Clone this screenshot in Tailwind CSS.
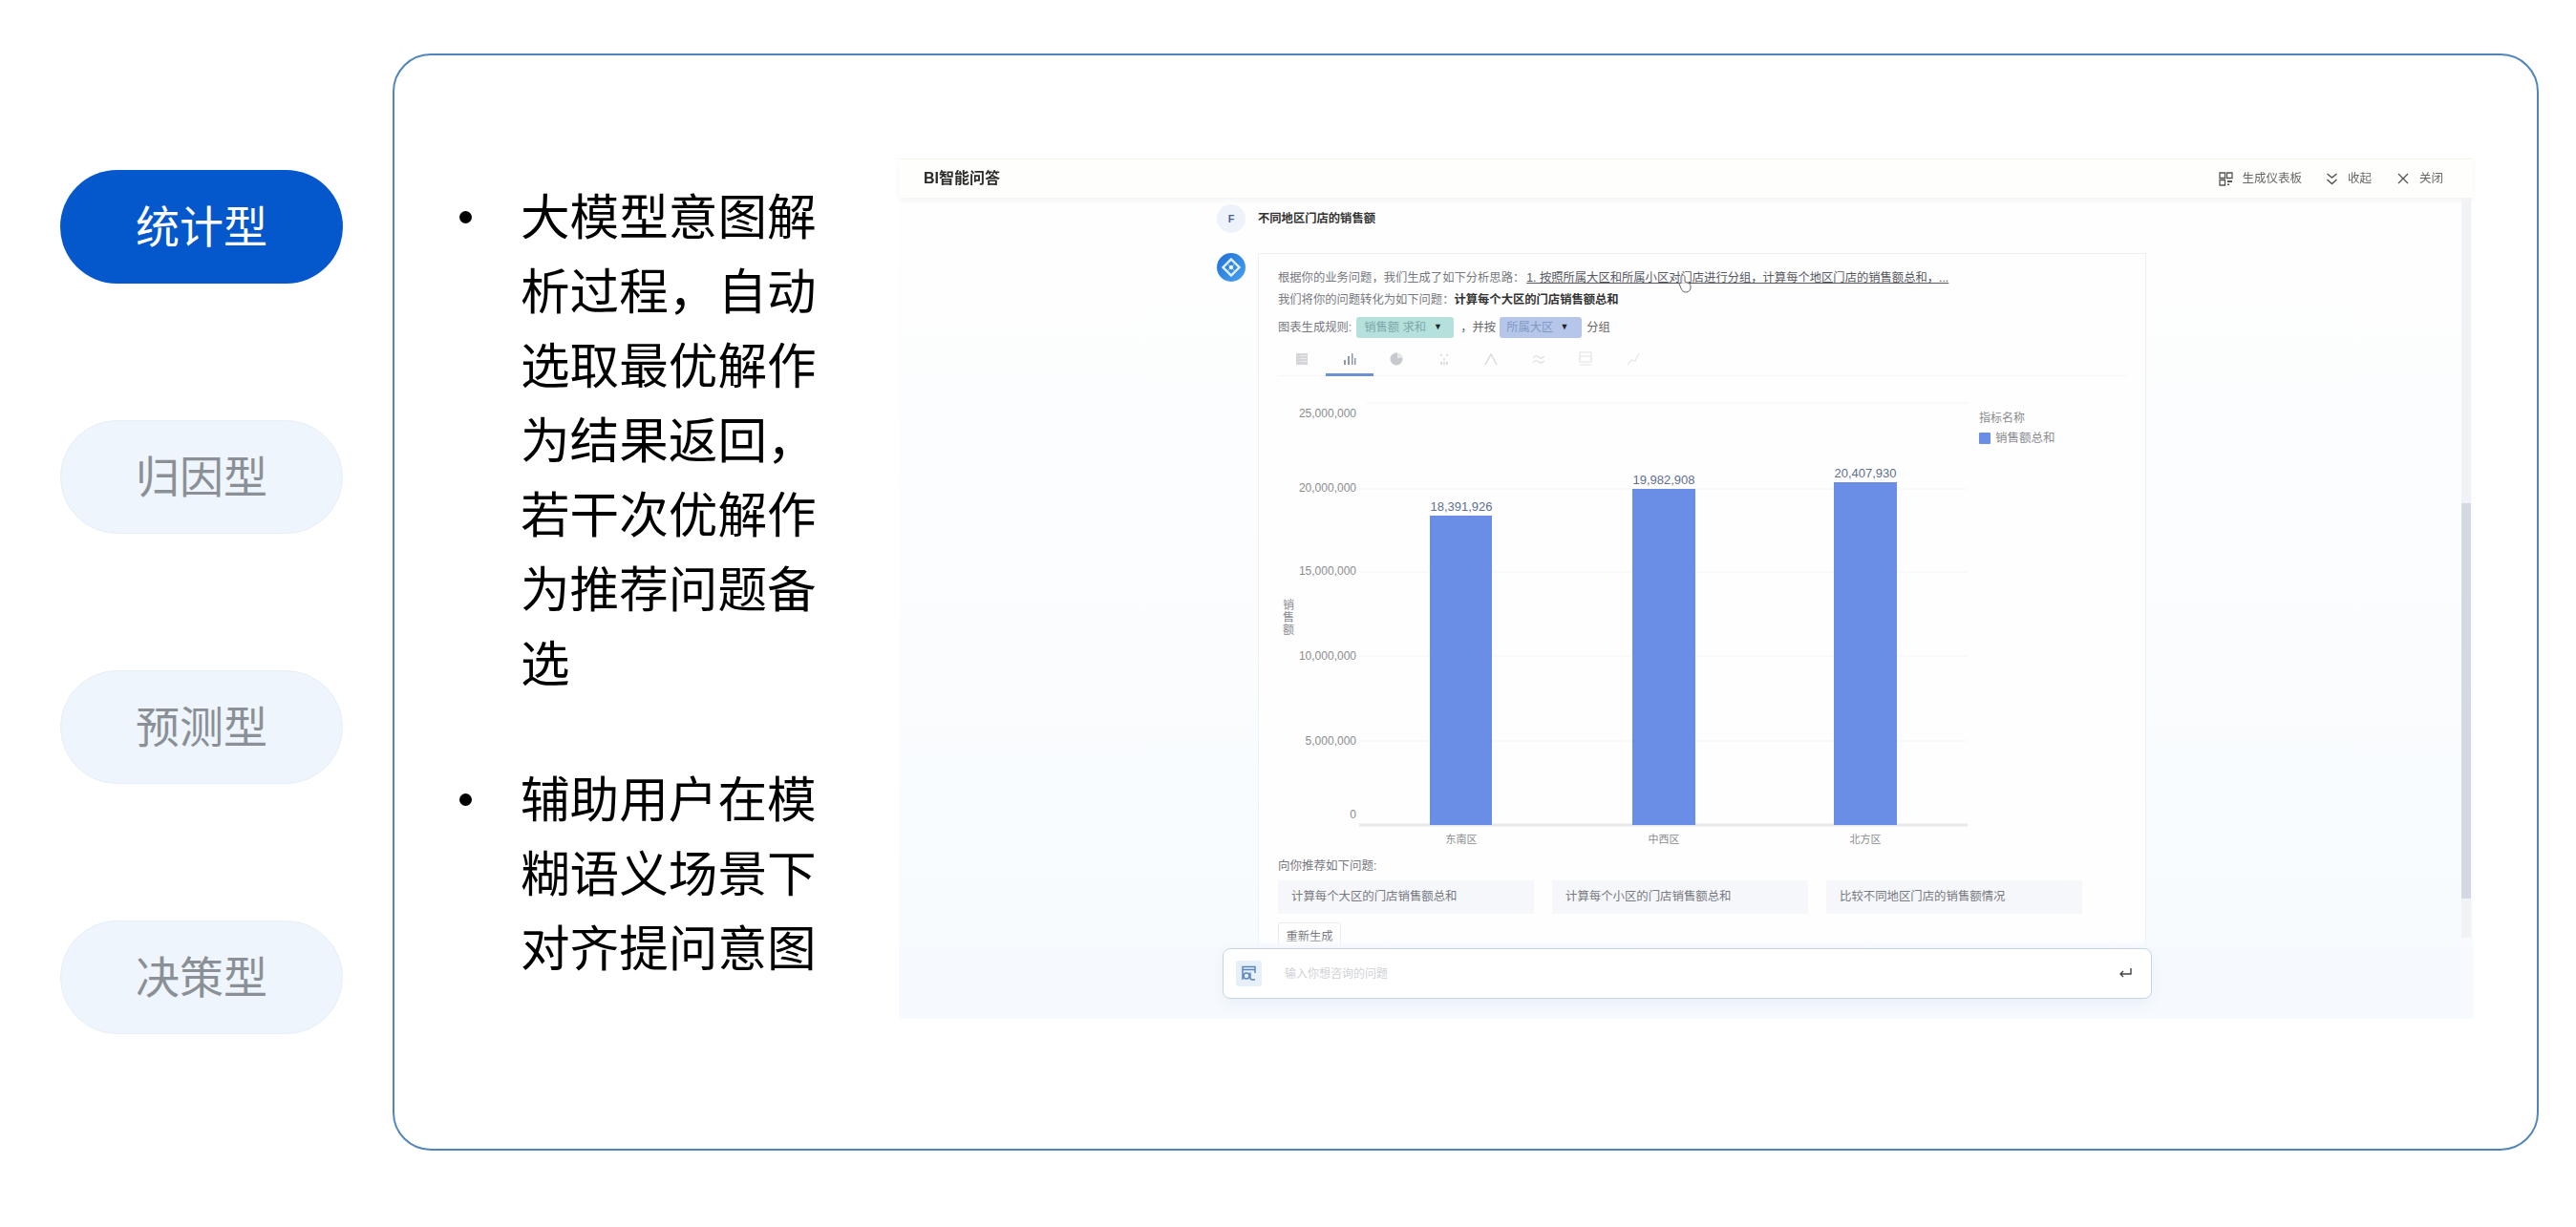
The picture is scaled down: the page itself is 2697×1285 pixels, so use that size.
<!DOCTYPE html>
<html lang="zh-CN">
<head>
  <meta charset="UTF-8" />
  <title>统计型</title>
  <script src="https://cdn.jsdelivr.net/npm/@tailwindcss/browser@4"></script>
</head>
<body class="bg-white font-['Liberation_Sans','Noto_Sans_CJK_SC',sans-serif] overflow-hidden">
  <div class="w-[2697px] h-[1285px] flex">

    <!-- left pills -->
    <div class="w-[411px] shrink-0 pl-[63px] pt-[178px] flex flex-col gap-[143px]">
      <div class="w-[296px] h-[119px] pt-[2px] rounded-full bg-[#0558cc] text-white text-[46px] flex items-center justify-center">统计型</div>
      <div class="w-[296px] h-[119px] pt-[2px] rounded-full bg-[#eef5fc] border border-[#e6eef6] text-[#8b9096] text-[46px] flex items-center justify-center">归因型</div>
      <div class="w-[296px] h-[119px] pt-[2px] rounded-full bg-[#eef5fc] border border-[#e6eef6] text-[#8b9096] text-[46px] flex items-center justify-center">预测型</div>
      <div class="w-[296px] h-[119px] pt-[2px] rounded-full bg-[#eef5fc] border border-[#e6eef6] text-[#8b9096] text-[46px] flex items-center justify-center">决策型</div>
    </div>

    <!-- main card -->
    <div class="mt-[56px] w-[2247px] h-[1149px] border-2 border-[#5285b8] rounded-[40px] flex items-start pl-[68px]">
      <ul class="w-[376px] shrink-0 mt-[131px] flex flex-col gap-[64px] text-black text-[51.6px] leading-[78px]">
        <li class="flex">
          <span class="w-[13px] h-[13px] mt-[32px] mr-[51px] shrink-0 rounded-full bg-black"></span>
          <span class="w-[312px]">大模型意图解析过程，自动选取最优解作为结果返回，若干次优解作为推荐问题备选</span>
        </li>
        <li class="flex">
          <span class="w-[13px] h-[13px] mt-[32px] mr-[51px] shrink-0 rounded-full bg-black"></span>
          <span class="w-[312px]">辅助用户在模糊语义场景下对齐提问意图</span>
        </li>
      </ul>

      <!-- embedded screenshot -->
      <div class="ml-[84px] mt-[108px] w-[1648px] h-[901px] shrink-0 flex flex-col blur-[0.7px]">
        <div class="relative z-10 h-[41px] shrink-0 border-t border-[#f6f3e2] bg-[#fefefc] shadow-[0_3px_6px_#f3f4f6] flex items-center justify-between pl-[26px] pr-[31px]">
          <span class="text-[16px] font-bold text-[#2b2b2b]">BI智能问答</span>
          <div class="flex items-center text-[12.5px] text-[#666]">
            <svg class="w-[15px] h-[15px] mr-[9px]" viewBox="0 0 15 15" fill="none" stroke="#555" stroke-width="1.3"><path d="M1 1h5.500v5.500H1zM8.500 1H14v5.500H8.500zM1 8.500h5.500V14H1z" /><path d="M9 9h5v2H9zM9 12.500h2V14H9z" fill="#555" stroke="none" /></svg>
            <span>生成仪表板</span>
            <svg class="w-[13px] h-[15px] ml-[25px] mr-[10px]" viewBox="0 0 13 15" fill="none" stroke="#555" stroke-width="1.500"><path d="M1.500 2l5 4 5-4M1.500 8l5 4.500 5-4.500" /></svg>
            <span>收起</span>
            <svg class="w-[12px] h-[12px] ml-[27px] mr-[11px]" viewBox="0 0 12 12" fill="none" stroke="#555" stroke-width="1.300"><path d="M1 1l10 10M11 1L1 11" /></svg>
            <span>关闭</span>
          </div>
        </div>

        <div class="relative flex-1 overflow-hidden bg-linear-to-b from-[#fefefe] to-[#f7fbfe] pl-[333px] pt-[7px]">
          <!-- question -->
          <div class="flex items-center gap-[13px] h-[30px]">
            <div class="w-[30px] h-[30px] rounded-full bg-[#eef2fb] text-[#4a5fa8] text-[11px] font-bold flex items-center justify-center">F</div>
            <span class="text-[12.3px] font-bold text-[#333]">不同地区门店的销售额</span>
          </div>

          <!-- answer -->
          <div class="mt-[21px] flex items-start gap-[13px]">
            <div class="w-[30px] h-[30px] shrink-0 rounded-full bg-linear-to-br from-[#1f6fd6] to-[#4aa3ee] flex items-center justify-center">
              <svg class="w-[22px] h-[22px]" viewBox="0 0 22 22" fill="none" stroke="#e4f1fc">
                <path d="M11 2.500l8.500 8.500-8.500 8.500L2.500 11z" stroke-width="2.400" />
                <path d="M6.500 6.500l9 9M15.500 6.500l-9 9" stroke="#a9d2f5" stroke-width="1" />
                <path d="M11 8.500l2.500 2.500-2.500 2.500L8.500 11z" fill="#fff" stroke="none" />
              </svg>
            </div>
            <div class="w-[930px] h-[760px] shrink-0 bg-[#fefefe] border border-[#eef0f4] pl-[20px] pt-[14px] pr-[19px] text-[12.3px] text-[#77797e]">
              <div class="h-[22px] flex items-center">
                <span>根据你的业务问题，我们生成了如下分析思路：</span>
                <span class="ml-[2px] text-[#55585e] underline">1. 按照所属大区和所属小区对门店进行分组，计算每个地区门店的销售额总和，...</span>
              </div>
              <div class="mt-[1px] h-[22px] flex items-center">
                <span>我们将你的问题转化为如下问题：</span>
                <span class="font-bold text-[#333]">计算每个大区的门店销售额总和</span>
              </div>
              <div class="mt-[7px] h-[22px] flex items-center">
                <span>图表生成规则:</span>
                <span class="ml-[5px] w-[102px] h-[22px] rounded-[3px] bg-[#b4e1dc] text-[#7fa8a8] flex items-center pl-[8px]">销售额 求和<span class="ml-[8px] text-[9px] text-[#222]">▼</span></span>
                <span class="ml-[7px] w-[41px] text-[#666]">，并按</span>
                <span class="w-[86px] h-[22px] rounded-[3px] bg-[#b5c6ea] text-[#8199c4] flex items-center pl-[7px]">所属大区<span class="ml-[7px] text-[9px] text-[#222]">▼</span></span>
                <span class="ml-[5px] text-[#666]">分组</span>
              </div>

              <!-- chart type tabs -->
              <div class="h-[40px] pt-[4px] border-b border-[#f4f5f6] flex">
                <div class="w-[49.5px] flex items-center justify-center">
                  <svg class="w-[14px] h-[14px]" viewBox="0 0 14 14" fill="#d4d6da"><path d="M1 1h12v12H1z" /><path d="M5 3h7v1H5zM5 6h7v1H5zM5 9h7v1H5z" fill="#e9eaec" /></svg>
                </div>
                <div class="w-[50px] relative flex items-center justify-center">
                  <svg class="w-[14px] h-[14px]" viewBox="0 0 14 14" fill="#8d98a8"><path d="M1 8h2v5H1zM5 4h2v9H5zM9 1h1.500v12H9zM12 6h1.500v7H12z" /></svg>
                  <span class="absolute left-0 right-0 bottom-[-1px] h-[3px] bg-[#6d90cf]"></span>
                </div>
                <div class="w-[49.5px] flex items-center justify-center">
                  <svg class="w-[14px] h-[14px]" viewBox="0 0 14 14"><circle cx="7" cy="7" r="6.500" fill="#c6c9ce" /><path d="M8 1v5h5A6 6 0 0 0 8 1z" fill="#e6e7ea" /></svg>
                </div>
                <div class="w-[49.5px] flex items-center justify-center">
                  <svg class="w-[14px] h-[14px]" viewBox="0 0 14 14" fill="#dcdee1"><path d="M3 2h2v2H3zM9 2h2v2H9zM6 6h2v2H6zM3 10h2v3H3zM6 10h2v3H6zM9 10h2v3H9z" /></svg>
                </div>
                <div class="w-[49.5px] flex items-center justify-center">
                  <svg class="w-[14px] h-[14px]" viewBox="0 0 14 14" fill="none" stroke="#d8dadd" stroke-width="1.500"><path d="M1 13L7 2l6 11" /></svg>
                </div>
                <div class="w-[49.5px] flex items-center justify-center">
                  <svg class="w-[14px] h-[14px]" viewBox="0 0 14 14" fill="none" stroke="#dfe1e4" stroke-width="1.300"><path d="M1 6c2-3 4-3 6-1s4 1 6-1M1 11c2-3 4-3 6-1s4 1 6-1" /></svg>
                </div>
                <div class="w-[49.5px] flex items-center justify-center">
                  <svg class="w-[14px] h-[16px]" viewBox="0 0 14 16" fill="none" stroke="#e0e2e5" stroke-width="1.200"><path d="M1 1h12v10H1zM1 14h12M1 5h12" /></svg>
                </div>
                <div class="w-[49.5px] flex items-center justify-center">
                  <svg class="w-[14px] h-[16px]" viewBox="0 0 14 16" fill="none" stroke="#e3e5e8" stroke-width="1.200"><path d="M1 14l4-5 4 1 4-8" /></svg>
                </div>
              </div>

              <!-- bar chart, drawn in page coordinates -->
              <svg class="block w-[890px] h-[502px]" viewBox="1338 395 890 502" font-size="12" fill="#8a8c90">
                <g stroke="#f6f7f8" stroke-width="1.500">
                  <path d="M1430 423H2060M1423 513H2060M1423 600H2060M1423 688H2060M1423 777H2060" />
                </g>
                <path d="M1423 865H2060" stroke="#e7e8ea" stroke-width="3" />
                <g text-anchor="end">
                  <text x="1420" y="438">25,000,000</text>
                  <text x="1420" y="516">20,000,000</text>
                  <text x="1420" y="603">15,000,000</text>
                  <text x="1420" y="692">10,000,000</text>
                  <text x="1420" y="781">5,000,000</text>
                  <text x="1420" y="858">0</text>
                </g>
                <g text-anchor="middle">
                  <text x="1349" y="639">销</text>
                  <text x="1349" y="652">售</text>
                  <text x="1349" y="665">额</text>
                </g>
                <g fill="#6a8de6">
                  <rect x="1497" y="541" width="65" height="324" />
                  <rect x="1709" y="513" width="66" height="352" />
                  <rect x="1920" y="506" width="66" height="359" />
                </g>
                <g text-anchor="middle" font-size="13" fill="#5f6f8e">
                  <text x="1530" y="536">18,391,926</text>
                  <text x="1742" y="508">19,982,908</text>
                  <text x="1953" y="501">20,407,930</text>
                </g>
                <g text-anchor="middle" font-size="11">
                  <text x="1530" y="884">东南区</text>
                  <text x="1742" y="884">中西区</text>
                  <text x="1953" y="884">北方区</text>
                </g>
                <text x="2072" y="443">指标名称</text>
                <rect x="2072" y="454" width="12" height="12" rx="1" fill="#6a8de6" />
                <text x="2089" y="464" font-size="12.500">销售额总和</text>
              </svg>

              <div class="h-[22px] text-[12.500px] flex items-center">向你推荐如下问题:</div>
              <div class="mt-[4px] flex gap-[19px] text-[12.400px]">
                <div class="w-[268px] h-[35px] bg-[#f5f7fb] flex items-center pl-[14px]">计算每个大区的门店销售额总和</div>
                <div class="w-[268px] h-[35px] bg-[#f5f7fb] flex items-center pl-[14px]">计算每个小区的门店销售额总和</div>
                <div class="w-[268px] h-[35px] bg-[#f5f7fb] flex items-center pl-[14px]">比较不同地区门店的销售额情况</div>
              </div>
              <div class="mt-[9px] w-[66px] h-[30px] rounded-[3px] border border-[#e8eaee] bg-white flex items-center justify-center">重新生成</div>
            </div>
          </div>

          <!-- scrollbar -->
          <div class="absolute right-[2px] top-0 w-[10px] h-[775px] bg-[#f1f2f5]">
            <div class="mt-[320px] h-[414px] bg-[#d4d8e3]"></div>
          </div>

          <!-- input bar over the content -->
          <div class="absolute left-0 right-0 bottom-0 h-[85px] bg-linear-to-b from-white/0 to-[#f6fafe] to-[12%] pl-[339px]">
            <div class="mt-[11px] w-[973px] h-[53px] rounded-[8px] border border-[#c6d5e2] bg-white shadow-[0_6px_14px_#e9f0f8] flex items-center pl-[13px] pr-[19px]">
              <div class="w-[27px] h-[27px] rounded-[3px] bg-[#e6effa] flex items-center justify-center">
                <svg class="w-[15px] h-[17px]" viewBox="0 0 15 17" fill="none" stroke="#5b86b8" stroke-width="1.500"><path d="M1 15V1.500h13V8" /><path d="M1 4.500h13" /><circle cx="5" cy="11" r="3" /><path d="M9 7.500v5.500c0 1 1 2 2 2h3" /></svg>
              </div>
              <span class="ml-[24px] text-[12px] text-[#d0d2d6]">输入你想咨询的问题</span>
              <svg class="ml-auto w-[15px] h-[13px]" viewBox="0 0 15 13" fill="none" stroke="#444" stroke-width="1.400"><path d="M13 1v6H2M5 4L2 7l3 3" /></svg>
            </div>
          </div>

          <!-- mouse pointer caught in the recording -->
          <svg class="absolute left-[815px] top-[80px] w-[16px] h-[20px]" viewBox="0 0 16 20" fill="#ffffffcc" stroke="#666" stroke-width="1"><path d="M6 1c1 0 2 1 2 2v5l5 2c1 1 1 2 1 4 0 3-2 5-5 5s-4-2-5-4L2 10c0-1 1-1 2 0V3c0-1 1-2 2-2z" /></svg>
        </div>
      </div>
    </div>
  </div>
</body>
</html>
